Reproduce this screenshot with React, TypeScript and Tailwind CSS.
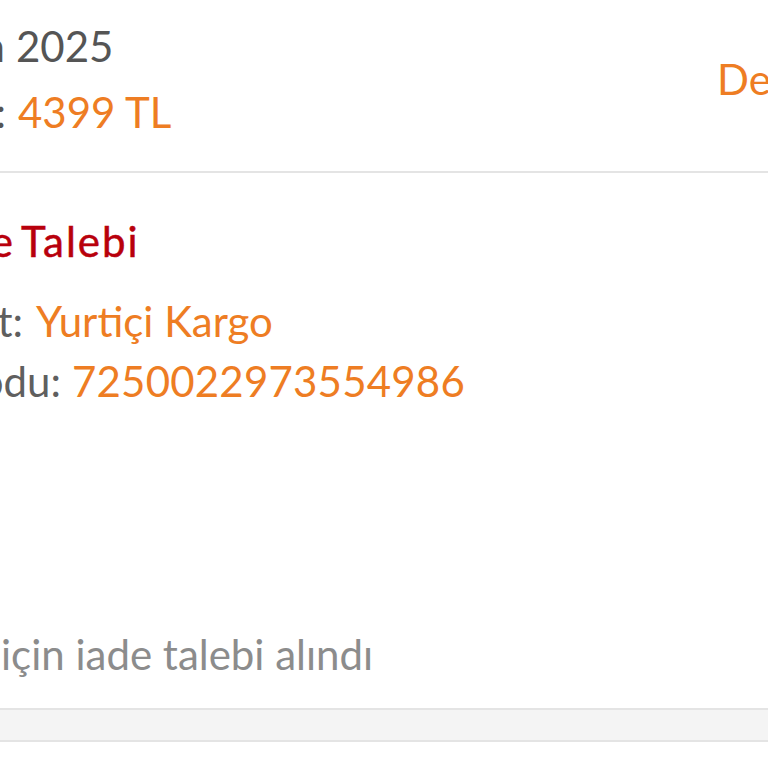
import React from 'react';

// Label whose right edge sits at a fixed x; anything wider spills off to the left.
const Cut: React.FC<{ edge: string; children: React.ReactNode }> = ({ edge, children }) => (
  <div className={`flex shrink-0 justify-end ${edge}`}>
    <span className="shrink-0 whitespace-nowrap">{children}</span>
  </div>
);

const App: React.FC = () => {
  return (
    <div className="w-[768px] h-[768px] overflow-hidden bg-white font-['Lato','Noto_Sans',sans-serif] text-[42px]">
      {/* Order summary */}
      <div className="flex items-center justify-between pt-[13px] pb-[26px] border-b-2 border-[#e4e4e4]">
        <div className="leading-[66px]">
          <div className="flex text-[#555555]">
            <Cut edge="w-[5px]">12 Haziran</Cut>
            <span className="ml-[11px]">2025</span>
          </div>
          <div className="flex">
            <Cut edge="w-[6px]"><span className="text-[#555555]">Toplam Tutar:</span></Cut>
            <span className="ml-[12px] text-[#ee7d23]">4399 TL</span>
          </div>
        </div>
        <div className="shrink-0 whitespace-nowrap text-[#ee7d23] w-[51px] leading-[66px]">Detaylar</div>
      </div>

      {/* Return request card */}
      <div className="pt-[35px] pb-[24px] border-b-2 border-[#e4e4e4]">
        <div className="flex leading-[66px] text-[#b8000c] tracking-[2px] [-webkit-text-stroke:0.5px_#b8000c]">
          <Cut edge="w-[15px]">İade</Cut>
          <span className="ml-[6px]">Talebi</span>
        </div>
        <div className="mt-[17px] leading-[60px]">
          <div className="flex">
            <Cut edge="w-[23px]"><span className="text-[#5f5f5f]">Kargo Şirket:</span></Cut>
            <span className="ml-[13px] text-[#ee7d23]">Yurtiçi Kargo</span>
          </div>
          <div className="flex items-baseline">
            <Cut edge="w-[61px]"><span className="text-[#5f5f5f]">Kargo Takip Kodu:</span></Cut>
            <span className="ml-[11px] text-[#ee7d23] tracking-[0.2px]">7250022973554986</span>
          </div>
        </div>
        <div className="mt-[213px] flex leading-[60px] text-[#8c8c8c]">
          <Cut edge="w-[0px]">Siparişiniz</Cut>
          <span className="ml-[1px]">için iade talebi alındı</span>
        </div>
      </div>

      <div className="h-[32px] bg-[#f4f4f4] border-b-2 border-[#e4e4e4]" />
    </div>
  );
};

export default App;
